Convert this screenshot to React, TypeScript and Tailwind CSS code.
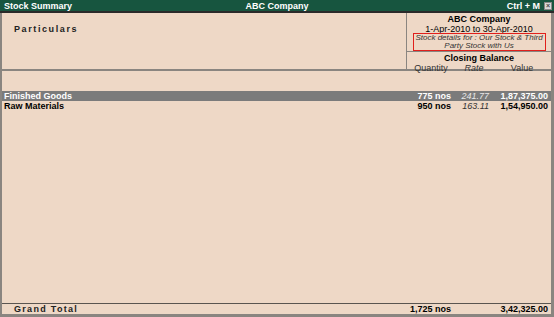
import React from "react";

const rows = [
  { name: "Finished Goods", qty: "775 nos", rate: "241.77", value: "1,87,375.00", sel: true },
  { name: "Raw Materials", qty: "950 nos", rate: "163.11", value: "1,54,950.00", sel: false },
];

export default function App() {
  return (
    <div
      className="w-[554px] h-[317px] flex flex-col bg-[#eed8c6] text-[9px] leading-[10px] text-black overflow-hidden"
      style={{ fontFamily: "'Liberation Sans', Arial, sans-serif" }}
    >
      {/* title bar */}
      <div className="h-[11px] bg-[#17553f] text-white font-bold flex items-center relative shrink-0">
        <span className="pl-[4px]">Stock Summary</span>
        <span className="absolute left-0 right-0 text-center">ABC Company</span>
        <span className="ml-auto mr-[4px] relative">Ctrl + M</span>
        <span className="relative w-[8px] h-[8px] bg-[#d8d8d8] border border-[#888] mr-[2px] flex items-center justify-center text-[#444] text-[7px] leading-none">
          ×
        </span>
      </div>
      <div className="h-[2px] bg-[#2a2a2a] shrink-0" />
      {/* main */}
      <div className="flex-1 flex flex-col border-l-[2px] border-r-[3px] border-b-[3px] border-[#8a8580]">
        {/* header */}
        <div className="flex h-[58px] border-b-[2px] border-[#8a8580] shrink-0">
          <div className="flex-1 pl-[12px] pt-[11px] font-bold tracking-[1.6px] text-[#222]">Particulars</div>
          <div className="w-[145px] border-l border-[#8a8580] flex flex-col">
            <div className="h-[39px] border-b border-[#8a8580] flex flex-col items-center pt-[1px]">
              <div className="font-bold">ABC Company</div>
              <div>1-Apr-2010 to 30-Apr-2010</div>
              <div className="mt-[-1px] w-[133px] h-[18px] border-[1.5px] border-[#e0201c] italic text-[#333] text-center flex flex-col justify-center leading-[8px] text-[8px] whitespace-nowrap">
                <div>Stock details for : Our Stock &amp; Third</div>
                <div>Party Stock with Us</div>
              </div>
            </div>
            <div className="font-bold text-center pt-[1px]">Closing Balance</div>
            <div className="flex text-[#333]">
              <div className="w-[48px] text-center">Quantity</div>
              <div className="w-[38px] text-center italic">Rate</div>
              <div className="flex-1 text-center">Value</div>
            </div>
          </div>
        </div>
        {/* rows */}
        <div className="flex-1 flex flex-col pt-[20px]">
          {rows.map((r) => (
            <div
              key={r.name}
              className={`flex h-[10px] items-center font-bold ${r.sel ? "bg-[#7b7b7b] text-white" : ""}`}
            >
              <div className="flex-1 pl-[2px]">{r.name}</div>
              <div className="w-[48px] text-right pr-[3px]">{r.qty}</div>
              <div className={`w-[38px] text-right pr-[3px] italic font-normal ${r.sel ? "text-[#e8e8e8]" : "text-[#333]"}`}>
                {r.rate}
              </div>
              <div className="w-[59px] text-right pr-[3px]">{r.value}</div>
            </div>
          ))}
        </div>
        {/* grand total */}
        <div className="flex h-[11px] items-center font-bold border-t border-[#5a5550] shrink-0">
          <div className="flex-1 pl-[12px] tracking-[1.3px] text-[#222]">Grand Total</div>
          <div className="w-[48px] text-right pr-[3px] whitespace-nowrap">1,725 nos</div>
          <div className="w-[38px]" />
          <div className="w-[59px] text-right pr-[3px]">3,42,325.00</div>
        </div>
      </div>
    </div>
  );
}
